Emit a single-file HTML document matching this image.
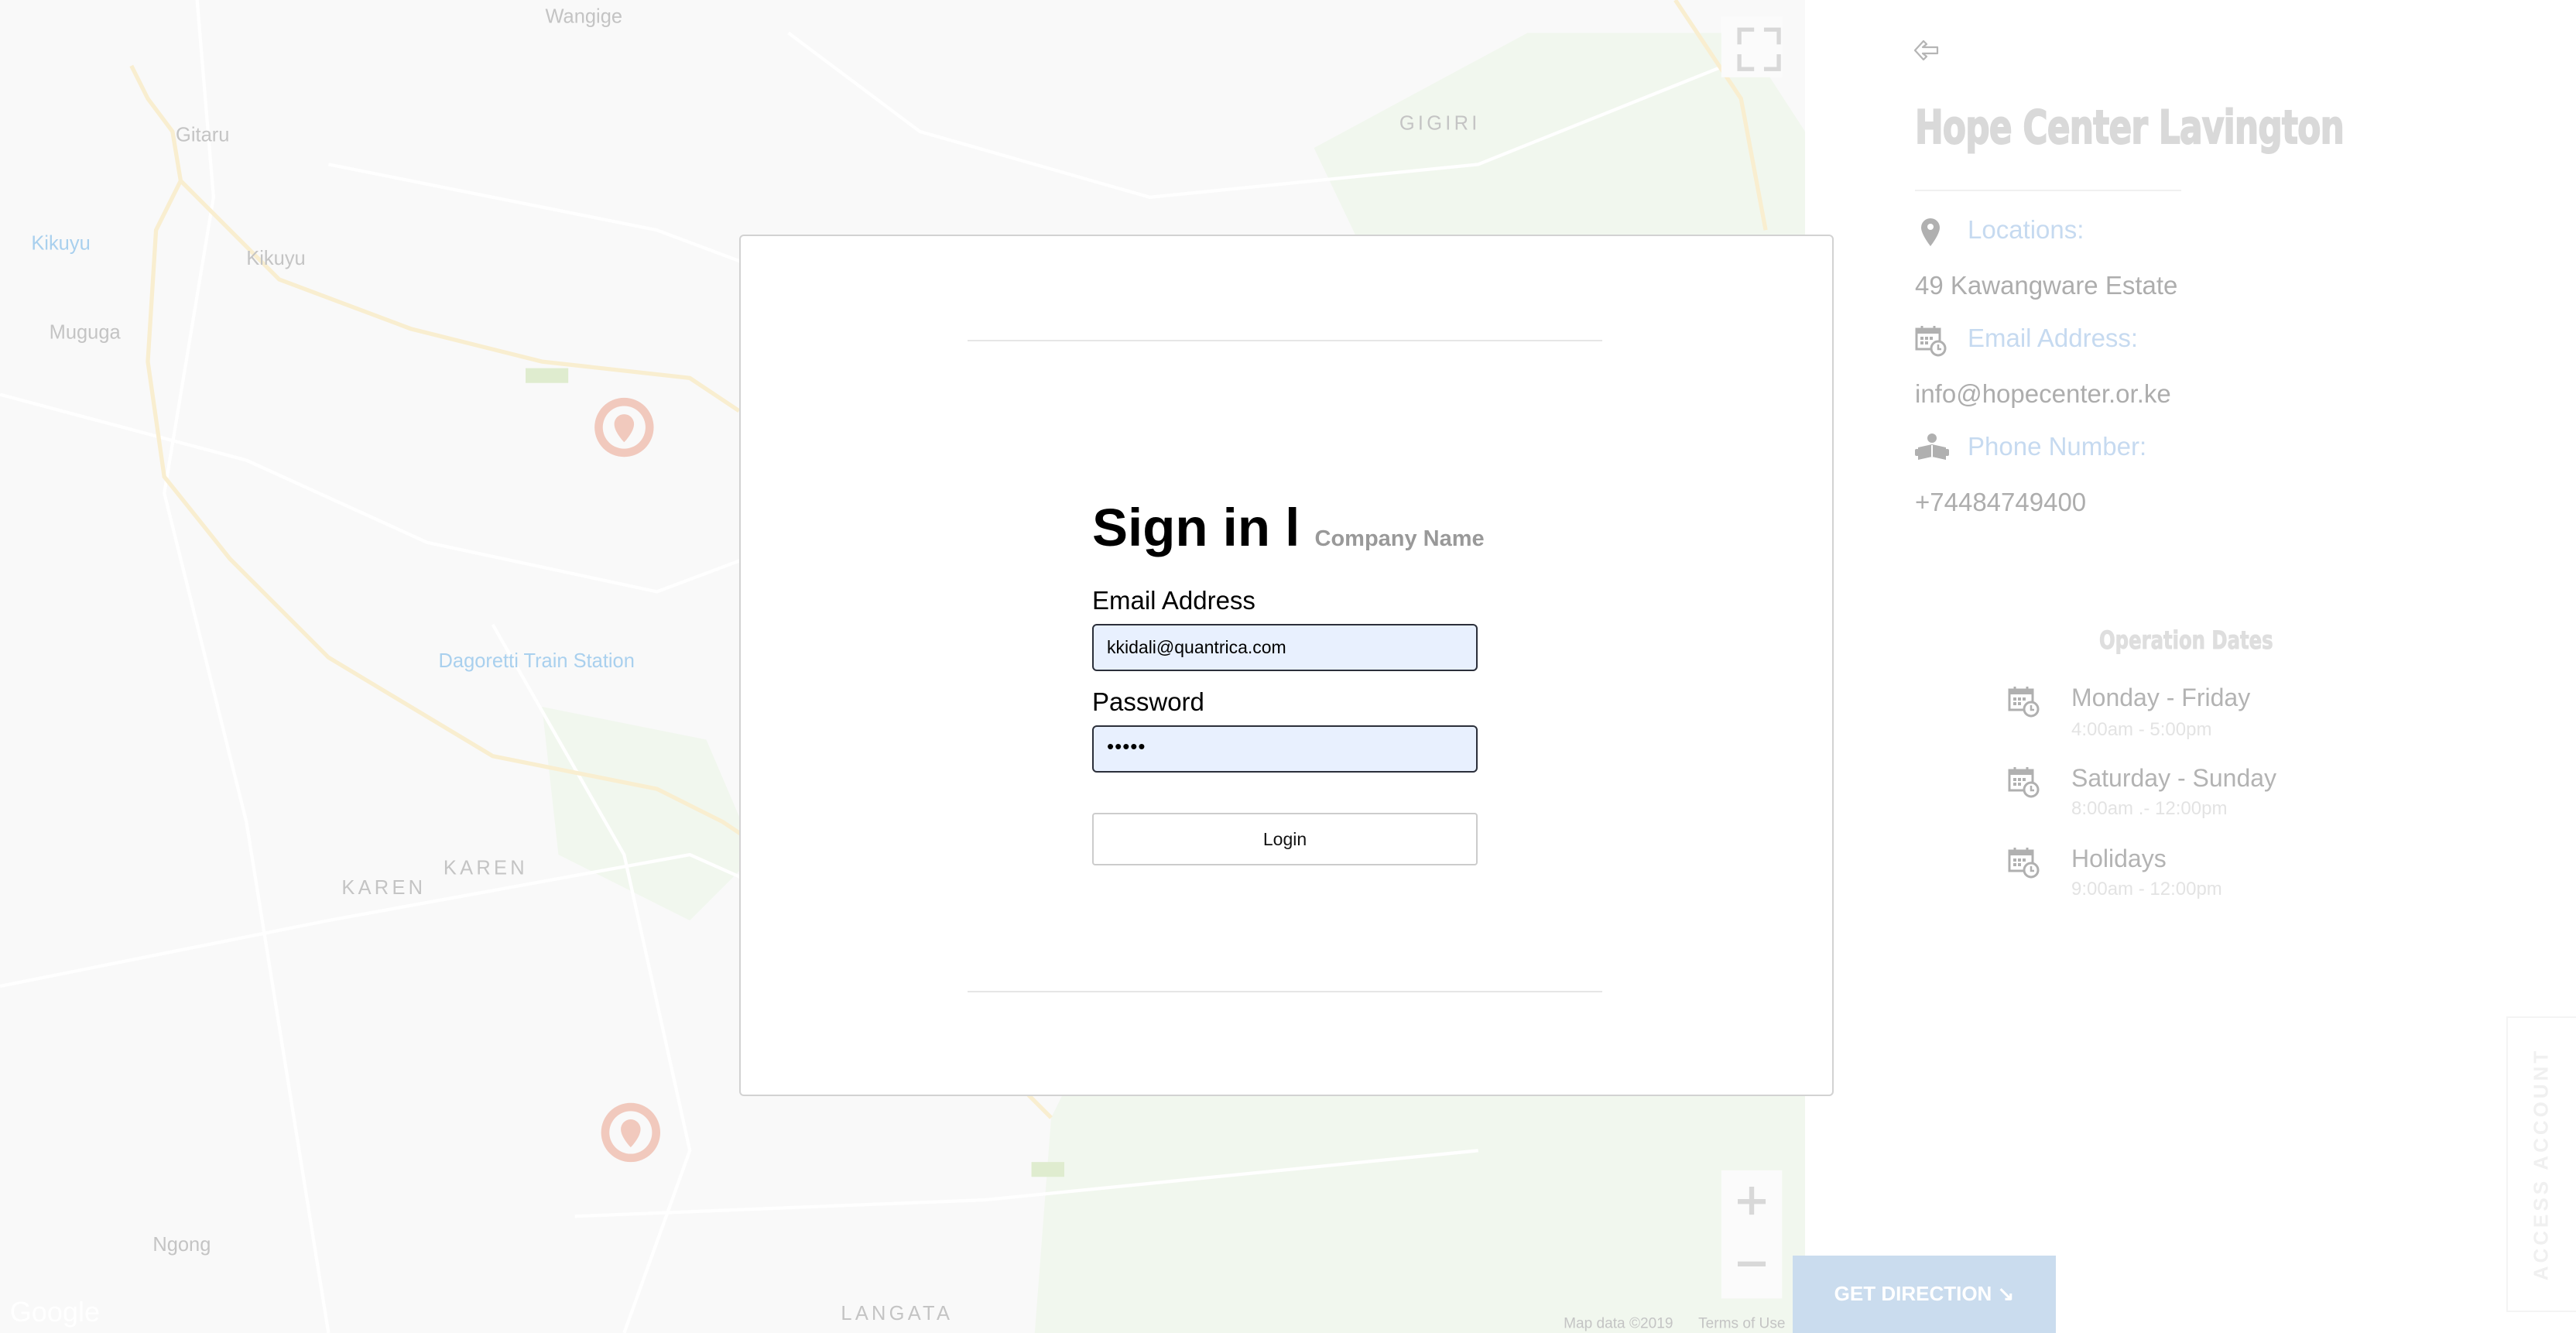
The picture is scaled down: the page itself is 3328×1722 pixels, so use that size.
<!DOCTYPE html>
<html><head><meta charset="utf-8"><style>
html,body{margin:0;padding:0;width:3328px;height:1722px;overflow:hidden;background:#fff;font-family:"Liberation Sans",Arial,sans-serif}
.abs{position:absolute}
#map{position:absolute;left:0;top:0;width:2332px;height:1722px;background:#f9f9f9}
.modal{position:absolute;left:955px;top:303px;width:1414px;height:1113px;background:#fff;border:2px solid #d2d2d2;border-radius:6px;box-sizing:border-box}
.hr{position:absolute;height:2px;background:#e6e6e6}
.lbl{position:absolute;font-size:33px;color:#000}
.inp{position:absolute;left:1411px;width:498px;height:61px;background:#e8f0fe;border:2px solid #2b2f3a;border-radius:6px;box-sizing:border-box;font-size:23px;padding-left:17px;line-height:57px;color:#000}
.side{position:absolute;left:2332px;top:0;width:996px;height:1722px;background:#fff}
.lb{position:absolute;left:2542px;font-size:33px;color:#c6daf0}
.vl{position:absolute;left:2474px;font-size:33px;color:#adadad}
.dt{position:absolute;left:2676px;font-size:32px;color:#b3b3b3}
.sub{position:absolute;left:2676px;font-size:24px;color:#e3e3e3}
</style></head><body>
<svg id="map" viewBox="0 0 1099 811" preserveAspectRatio="none" width="2332" height="1722">
<rect width="1099" height="811" fill="#f9f9f9"/>
<path d="M800 90 L930 20 L1060 20 L1099 80 L1099 811 L630 811 L640 680 L700 560 L800 520 L900 300 Z" fill="#f1f7ee"/>
<path d="M330 430 L430 450 L460 520 L420 560 L340 520 Z" fill="#f1f7ee"/>
<g fill="none" stroke="#fff" stroke-width="2">
<path d="M0 240 L150 280 L260 330 L400 360 L560 300 L700 330"/>
<path d="M120 0 L130 120 L100 300 L150 500 L200 811"/>
<path d="M300 380 L380 520 L420 700 L380 811"/>
<path d="M480 20 L560 80 L700 120 L900 100 L1050 40"/>
<path d="M0 600 L200 560 L420 520 L600 600 L900 650"/>
<path d="M350 740 L600 730 L900 700"/>
<path d="M200 100 L400 140 L560 200"/>
</g>
<g fill="none" stroke="#f9eed0" stroke-width="2.5">
<path d="M80 40 L90 60 L105 80 L110 110 L95 140 L90 220 L100 290 L140 340 L200 400 L300 460 L400 480 L440 500 L500 540 L640 680"/>
<path d="M110 110 L170 170 L250 200 L330 220 L420 230 L450 250"/>
<path d="M1020 0 L1060 60 L1075 140"/>
</g>
<g fill="#f1c9bd">
<circle cx="380" cy="260" r="18"/><circle cx="384" cy="689" r="18"/>
</g>
<g fill="#f9f9f9"><circle cx="380" cy="260" r="13"/><circle cx="384" cy="689" r="13"/></g>
<g fill="#f1c9bd"><path d="M380 252a6 6 0 0 1 6 6c0 5-6 11-6 11s-6-6-6-11a6 6 0 0 1 6-6z"/><path d="M384 681a6 6 0 0 1 6 6c0 5-6 11-6 11s-6-6-6-11a6 6 0 0 1 6-6z"/></g>
<g font-family="Liberation Sans" fill="#c4c4c4" font-size="12">
<text x="332" y="14">Wangige</text><text x="107" y="86">Gitaru</text><text x="150" y="161">Kikuyu</text>
<text x="30" y="206">Muguga</text><text x="93" y="761">Ngong</text>
<text x="208" y="544" letter-spacing="2">KAREN</text><text x="270" y="532" letter-spacing="2">KAREN</text>
<text x="512" y="803" letter-spacing="2">LANGATA</text><text x="852" y="79" letter-spacing="2">GIGIRI</text>
<text x="19" y="152" fill="#a9d0ee">Kikuyu</text><text x="267" y="406" fill="#a9d0ee">Dagoretti Train Station</text>
<text x="6" y="804" fill="#fff" font-size="17">Google</text>
<text x="952" y="808" font-size="9">Map data ©2019</text><text x="1034" y="808" font-size="9">Terms of Use</text>
</g>
<rect x="320" y="224" width="26" height="9" fill="#dfeccf"/><rect x="628" y="707" width="20" height="9" fill="#dfeccf"/>
<rect x="1048" y="10" width="37" height="37" fill="#fbfbfb"/>
<path d="M1059 27v-9h9M1074 18h9v9M1083 33v9h-9M1068 42h-9v-9" stroke="#d8d8d8" stroke-width="2.5" fill="none"/>
<rect x="1048" y="712" width="37" height="78" fill="#fbfbfb"/>
<path d="M1058 731h17M1066.5 722v17M1058 769h17" stroke="#d8d8d8" stroke-width="3"/>
</svg>
<div class="side"></div>

<div class="modal"></div>
<div class="hr" style="left:1250px;top:439px;width:820px"></div>
<div class="hr" style="left:1250px;top:1280px;width:820px"></div>
<div class="abs" style="left:1411px;top:640px;font-size:69px;font-weight:bold;color:#000;white-space:nowrap;line-height:84px">Sign in l <span style="font-size:29px;color:#999">Company Name</span></div>
<div class="lbl" style="left:1411px;top:757px">Email Address</div>
<div class="inp" style="top:806px">kkidali@quantrica.com</div>
<div class="lbl" style="left:1411px;top:888px">Password</div>
<div class="inp" style="top:937px;font-size:26px;line-height:50px;letter-spacing:1px">•••••</div>
<div class="abs" style="left:1411px;top:1050px;width:498px;height:68px;border:2px solid #ccc;border-radius:4px;box-sizing:border-box;text-align:center;line-height:64px;font-size:23px;color:#111">Login</div>

<svg class="abs" style="left:2472px;top:50px" width="34" height="30" viewBox="0 0 34 30"><path d="M2 15 L13 3 L17 7 L12 11 L31 11 L31 19 L12 19 L17 23 L13 27 Z" fill="none" stroke="#b5b5b5" stroke-width="2.2" stroke-linejoin="round"/></svg>
<div class="abs" style="left:2474px;top:130px;font-size:60px;font-weight:900;color:#d9d9d9;white-space:nowrap;transform:scaleX(0.73);transform-origin:left top;letter-spacing:-1px;font-family:'DejaVu Sans','Liberation Sans',sans-serif;-webkit-text-stroke:2px #d9d9d9">Hope Center Lavington</div>
<div class="hr" style="left:2474px;top:245px;width:344px;background:#f0f0f0"></div>

<svg class="abs" style="left:2480px;top:280px" width="28" height="40" viewBox="0 0 28 40"><path d="M14 2a12 12 0 0 1 12 12c0 9-12 24-12 24S2 23 2 14A12 12 0 0 1 14 2z" fill="#b0b0b0"/><circle cx="14" cy="13" r="4" fill="#fff"/></svg>
<div class="lb" style="top:278px">Locations:</div>
<div class="vl" style="top:350px">49 Kawangware Estate</div>
<svg class="abs" style="left:2474px;top:420px" width="42" height="42" viewBox="0 0 42 42"><rect x="2" y="5" width="30" height="26" fill="none" stroke="#b0b0b0" stroke-width="3"/><rect x="2" y="5" width="30" height="6" fill="#b0b0b0"/><path d="M9 1v7M25 1v7" stroke="#b0b0b0" stroke-width="3"/><g fill="#b0b0b0"><rect x="7" y="15" width="4" height="4"/><rect x="13" y="15" width="4" height="4"/><rect x="19" y="15" width="4" height="4"/><rect x="7" y="21" width="4" height="4"/><rect x="13" y="21" width="4" height="4"/></g><circle cx="30" cy="30" r="9" fill="#fff" stroke="#b0b0b0" stroke-width="3"/><path d="M30 25v6h4" stroke="#b0b0b0" stroke-width="2.5" fill="none"/></svg>
<div class="lb" style="top:418px">Email Address:</div>
<div class="vl" style="top:490px">info@hopecenter.or.ke</div>
<svg class="abs" style="left:2474px;top:558px" width="44" height="40" viewBox="0 0 44 40"><circle cx="22" cy="8" r="6" fill="#b0b0b0"/><path d="M4 20 L22 16 L40 20 L40 36 L22 32 L4 36 Z" fill="#b0b0b0"/><path d="M22 17v15" stroke="#fff" stroke-width="2"/><rect x="0" y="22" width="5" height="9" rx="2" fill="#b0b0b0"/><rect x="39" y="22" width="5" height="9" rx="2" fill="#b0b0b0"/></svg>
<div class="lb" style="top:558px">Phone Number:</div>
<div class="vl" style="top:630px">+74484749400</div>

<div class="abs" style="left:2712px;top:808px;font-size:32px;font-weight:900;color:#dedede;white-space:nowrap;transform:scaleX(0.76);transform-origin:left top;font-family:'DejaVu Sans','Liberation Sans',sans-serif;-webkit-text-stroke:1px #dedede">Operation Dates</div>

<svg class="abs" style="left:2594px;top:886px" width="42" height="42" viewBox="0 0 42 42"><rect x="2" y="5" width="30" height="26" fill="none" stroke="#b0b0b0" stroke-width="3"/><rect x="2" y="5" width="30" height="6" fill="#b0b0b0"/><path d="M9 1v7M25 1v7" stroke="#b0b0b0" stroke-width="3"/><g fill="#b0b0b0"><rect x="7" y="15" width="4" height="4"/><rect x="13" y="15" width="4" height="4"/><rect x="19" y="15" width="4" height="4"/><rect x="7" y="21" width="4" height="4"/><rect x="13" y="21" width="4" height="4"/></g><circle cx="30" cy="30" r="9" fill="#fff" stroke="#b0b0b0" stroke-width="3"/><path d="M30 25v6h4" stroke="#b0b0b0" stroke-width="2.5" fill="none"/></svg>
<div class="dt" style="top:883px">Monday - Friday</div><div class="sub" style="top:929px">4:00am - 5:00pm</div>
<svg class="abs" style="left:2594px;top:990px" width="42" height="42" viewBox="0 0 42 42"><rect x="2" y="5" width="30" height="26" fill="none" stroke="#b0b0b0" stroke-width="3"/><rect x="2" y="5" width="30" height="6" fill="#b0b0b0"/><path d="M9 1v7M25 1v7" stroke="#b0b0b0" stroke-width="3"/><g fill="#b0b0b0"><rect x="7" y="15" width="4" height="4"/><rect x="13" y="15" width="4" height="4"/><rect x="19" y="15" width="4" height="4"/><rect x="7" y="21" width="4" height="4"/><rect x="13" y="21" width="4" height="4"/></g><circle cx="30" cy="30" r="9" fill="#fff" stroke="#b0b0b0" stroke-width="3"/><path d="M30 25v6h4" stroke="#b0b0b0" stroke-width="2.5" fill="none"/></svg>
<div class="dt" style="top:987px">Saturday - Sunday</div><div class="sub" style="top:1031px">8:00am .- 12:00pm</div>
<svg class="abs" style="left:2594px;top:1094px" width="42" height="42" viewBox="0 0 42 42"><rect x="2" y="5" width="30" height="26" fill="none" stroke="#b0b0b0" stroke-width="3"/><rect x="2" y="5" width="30" height="6" fill="#b0b0b0"/><path d="M9 1v7M25 1v7" stroke="#b0b0b0" stroke-width="3"/><g fill="#b0b0b0"><rect x="7" y="15" width="4" height="4"/><rect x="13" y="15" width="4" height="4"/><rect x="19" y="15" width="4" height="4"/><rect x="7" y="21" width="4" height="4"/><rect x="13" y="21" width="4" height="4"/></g><circle cx="30" cy="30" r="9" fill="#fff" stroke="#b0b0b0" stroke-width="3"/><path d="M30 25v6h4" stroke="#b0b0b0" stroke-width="2.5" fill="none"/></svg>
<div class="dt" style="top:1091px">Holidays</div><div class="sub" style="top:1135px">9:00am - 12:00pm</div>

<div class="abs" style="left:2316px;top:1622px;width:340px;height:100px;background:#cadcee;color:#fff;font-weight:bold;font-size:26px;text-align:center;line-height:98px">GET DIRECTION ↘</div>
<div class="abs" style="left:3238px;top:1313px;width:90px;height:382px;border:2px solid #f4f4f4;border-right:none;box-sizing:border-box"></div>
<div class="abs" style="left:3283px;top:1504px;transform:translate(-50%,-50%) rotate(-90deg);font-size:26px;font-weight:bold;color:#f0f0f0;letter-spacing:4px;white-space:nowrap">ACCESS ACCOUNT</div>
</body></html>
